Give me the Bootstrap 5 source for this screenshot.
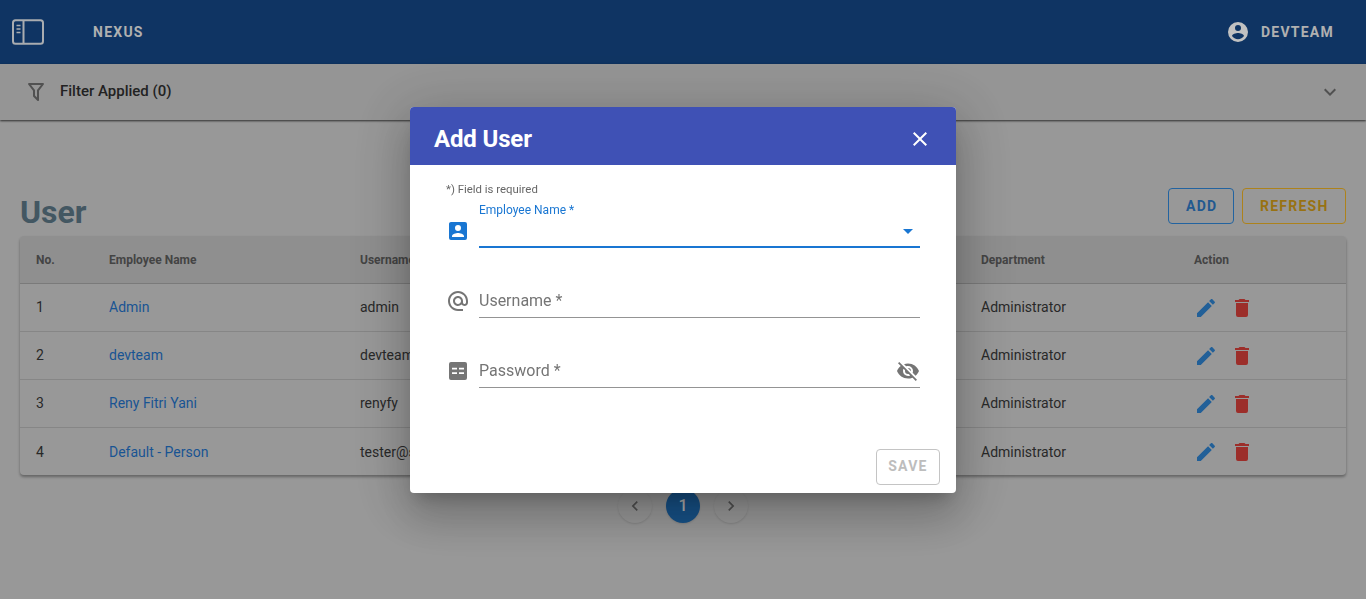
<!DOCTYPE html>
<html lang="en">
<head>
<meta charset="utf-8">
<title>Nexus - User</title>
<link href="https://cdn.jsdelivr.net/npm/bootstrap@5.3.0/dist/css/bootstrap.min.css" rel="stylesheet">
<style>
html,body{height:100%;overflow:hidden}
body{font-family:Roboto,"Liberation Sans",sans-serif;background:#bfbfbf;color:#2b2b2b}
.top-bar{height:64px;background:#13427c;color:#dcdcdc;padding:0 32px 0 12px;font-weight:700;font-size:14px;letter-spacing:1.25px}
.brand-name{margin-left:49px}
.user-name{margin-left:11px}
.filter-bar{height:56px;padding:0 24px 0 24px;background:#bbb;box-shadow:0 1px 2px rgba(0,0,0,.7);font-weight:500;font-size:15px;position:relative}
.filter-text{margin-top:-2px}
.filter-bar svg.funnel{margin-right:12px}
.page-wrap{padding:68px 20px 0}
.page-title{font-size:32px;line-height:48px;font-weight:700;color:#546d7b;margin:0}
.act-btn{height:36px;font-size:14px;font-weight:700;letter-spacing:1.25px;background:transparent;border-radius:4px;padding:0 17px;line-height:34px}
.act-add{border:1px solid #2b7cc8;color:#2b70b4;width:66px}
.act-refresh{border:1px solid #d9a322;color:#bf8f18;width:104px}
.user-sheet{border-radius:4px;box-shadow:0 2px 3px rgba(0,0,0,.35);overflow:hidden}
.user-table{width:1326px;table-layout:fixed;margin:0;--bs-table-bg:transparent;--bs-table-color:#333}
.user-table th{height:47px;background:#b3b3b3;font-size:12px;font-weight:700;color:#555;padding:2px 16px 0;vertical-align:middle;border-bottom:1px solid #999}
.user-table td{height:48px;font-size:14px;padding:0 16px;vertical-align:middle;border-bottom:1px solid #a8a8a8}
.user-table tr:last-child td{border-bottom:0;padding-top:2px}
.user-table tr:last-child .row-actions{margin-top:0}
.user-table a{color:#1f6ab8;text-decoration:none}
.row-actions{gap:12px;margin-top:1px}
.pager-row{margin-top:14px;gap:14px}
.pager-btn{width:34px;height:34px;border-radius:50%;background:#bfbfbf;box-shadow:0 1px 2px rgba(0,0,0,.12);font-size:16px;font-weight:500;color:#ddd}
.pager-on{background:#1c66aa}
.modal-backdrop.dim-layer{--bs-backdrop-bg:#000;--bs-backdrop-opacity:.2}
.modal-dialog.add-dialog{max-width:546px;width:546px;margin:0 auto;min-height:100%}
.add-content{border:0;border-radius:4px;height:386px;box-shadow:0 11px 15px -7px rgba(0,0,0,.2),0 24px 38px 3px rgba(0,0,0,.14),0 9px 60px 12px rgba(0,0,0,.16)}
.add-head{height:58px;background:#3f51b5;color:#fff;padding:6px 24px 0;border:0;border-radius:4px 4px 0 0}
.add-head h5{font-size:24px;font-weight:700;margin:0;letter-spacing:-.15px}
.add-body{padding:17px 36px 0;flex:0 0 auto}
.req-note{font-size:11.4px;line-height:14px;color:#666}
.form-line{height:70px;gap:9px}
.form-line.first-line{height:52px}
.field-icon{width:24px;height:24px;margin-bottom:5px;flex:none}
.field-box{flex:1;position:relative;height:36px;border-bottom:1px solid #949494;font-size:16px;line-height:24px;color:#757575;padding-top:7px}
.first-line .field-box{border-bottom:2px solid #1976d2;height:36px}
.float-label{position:absolute;left:0;top:-9px;font-size:12px;line-height:14px;color:#1976d2}
.field-end{position:absolute;right:0;top:7px}
.add-foot{padding:0 16px 8px;border:0;margin-top:auto}
.save-btn{width:64px;height:36px;font-size:14px;font-weight:700;letter-spacing:1.25px;color:#bdbdbd;border:1px solid #c4c4c4;border-radius:4px;background:#fff;padding:0}
</style>
</head>
<body>
<header class="top-bar d-flex align-items-center justify-content-between">
  <div class="d-flex align-items-center">
    <svg width="32" height="26" viewBox="0 0 32 26" fill="none" stroke="#d4d7dc" stroke-width="2"><rect x="1" y="1.2" width="30" height="23.6" rx="2.5"/><line x1="11.5" y1="1.2" x2="11.5" y2="24.8"/><path d="M4.5 6.5h4M4.5 10h4M4.5 13.5h4" stroke-width="1.4"/></svg>
    <span class="brand-name">NEXUS</span>
  </div>
  <div class="d-flex align-items-center">
    <svg width="24" height="24" viewBox="0 0 24 24" fill="#f2f2f2"><path d="M12,19.2C9.5,19.2 7.29,17.92 6,16C6.03,14 10,12.9 12,12.9C14,12.9 17.97,14 18,16C16.71,17.92 14.5,19.2 12,19.2M12,5A3,3 0 0,1 15,8A3,3 0 0,1 12,11A3,3 0 0,1 9,8A3,3 0 0,1 12,5M12,2A10,10 0 0,0 2,12A10,10 0 0,0 12,22A10,10 0 0,0 22,12A10,10 0 0,0 12,2Z"/></svg>
    <span class="user-name">DEVTEAM</span>
  </div>
</header>

<section class="filter-bar d-flex align-items-center justify-content-between">
  <div class="d-flex align-items-center">
    <svg class="funnel" width="24" height="24" viewBox="0 0 24 24" fill="#666"><path d="M15,19.88C15.04,20.18 14.94,20.5 14.71,20.71C14.32,21.1 13.69,21.1 13.3,20.71L9.29,16.7C9.06,16.47 8.96,16.16 9,15.87V10.75L4.21,4.62C3.87,4.19 3.95,3.56 4.38,3.22C4.57,3.08 4.78,3 5,3V3H19V3C19.22,3 19.43,3.08 19.62,3.22C20.05,3.56 20.13,4.19 19.79,4.62L15,10.75V19.88M7.04,5L11,10.06V15.58L13,17.58V10.05L16.96,5H7.04Z"/></svg>
    <span class="filter-text">Filter Applied (0)</span>
  </div>
  <svg width="24" height="24" viewBox="0 0 24 24" fill="#666"><path d="M7.41,8.58L12,13.17L16.59,8.58L18,10L12,16L6,10L7.41,8.58Z"/></svg>
</section>

<main class="page-wrap">
  <div class="d-flex justify-content-between mb-0">
    <h1 class="page-title">User</h1>
    <div class="d-flex gap-2">
      <button class="act-btn act-add" type="button">ADD</button>
      <button class="act-btn act-refresh" type="button">REFRESH</button>
    </div>
  </div>
  <div class="user-sheet">
    <table class="table user-table">
      <colgroup><col style="width:73px"><col style="width:251px"><col style="width:200px"><col style="width:200px"><col style="width:221px"><col style="width:213px"><col style="width:168px"></colgroup>
      <thead><tr><th>No.</th><th>Employee Name</th><th>Username</th><th></th><th></th><th>Department</th><th>Action</th></tr></thead>
      <tbody>
        <tr><td>1</td><td><a href="#">Admin</a></td><td>admin</td><td></td><td></td><td>Administrator</td><td><div class="row-actions d-flex"><svg width="24" height="24" viewBox="0 0 24 24" fill="#2b78bf"><path d="M20.71,7.04C21.1,6.65 21.1,6 20.71,5.63L18.37,3.29C18,2.9 17.35,2.9 16.96,3.29L15.12,5.12L18.87,8.87M3,17.25V21H6.75L17.81,9.93L14.06,6.18L3,17.25Z"/></svg><svg width="24" height="24" viewBox="0 0 24 24" fill="#c43a35"><path d="M19,4H15.5L14.5,3H9.5L8.5,4H5V6H19M6,19A2,2 0 0,0 8,21H16A2,2 0 0,0 18,19V7H6V19Z"/></svg></div></td></tr>
        <tr><td>2</td><td><a href="#">devteam</a></td><td>devteam</td><td></td><td></td><td>Administrator</td><td><div class="row-actions d-flex"><svg width="24" height="24" viewBox="0 0 24 24" fill="#2b78bf"><path d="M20.71,7.04C21.1,6.65 21.1,6 20.71,5.63L18.37,3.29C18,2.9 17.35,2.9 16.96,3.29L15.12,5.12L18.87,8.87M3,17.25V21H6.75L17.81,9.93L14.06,6.18L3,17.25Z"/></svg><svg width="24" height="24" viewBox="0 0 24 24" fill="#c43a35"><path d="M19,4H15.5L14.5,3H9.5L8.5,4H5V6H19M6,19A2,2 0 0,0 8,21H16A2,2 0 0,0 18,19V7H6V19Z"/></svg></div></td></tr>
        <tr><td>3</td><td><a href="#">Reny Fitri Yani</a></td><td>renyfy</td><td></td><td></td><td>Administrator</td><td><div class="row-actions d-flex"><svg width="24" height="24" viewBox="0 0 24 24" fill="#2b78bf"><path d="M20.71,7.04C21.1,6.65 21.1,6 20.71,5.63L18.37,3.29C18,2.9 17.35,2.9 16.96,3.29L15.12,5.12L18.87,8.87M3,17.25V21H6.75L17.81,9.93L14.06,6.18L3,17.25Z"/></svg><svg width="24" height="24" viewBox="0 0 24 24" fill="#c43a35"><path d="M19,4H15.5L14.5,3H9.5L8.5,4H5V6H19M6,19A2,2 0 0,0 8,21H16A2,2 0 0,0 18,19V7H6V19Z"/></svg></div></td></tr>
        <tr><td>4</td><td><a href="#">Default - Person</a></td><td>tester@s</td><td></td><td></td><td>Administrator</td><td><div class="row-actions d-flex"><svg width="24" height="24" viewBox="0 0 24 24" fill="#2b78bf"><path d="M20.71,7.04C21.1,6.65 21.1,6 20.71,5.63L18.37,3.29C18,2.9 17.35,2.9 16.96,3.29L15.12,5.12L18.87,8.87M3,17.25V21H6.75L17.81,9.93L14.06,6.18L3,17.25Z"/></svg><svg width="24" height="24" viewBox="0 0 24 24" fill="#c43a35"><path d="M19,4H15.5L14.5,3H9.5L8.5,4H5V6H19M6,19A2,2 0 0,0 8,21H16A2,2 0 0,0 18,19V7H6V19Z"/></svg></div></td></tr>
      </tbody>
    </table>
  </div>
  <nav class="pager-row d-flex justify-content-center">
    <div class="pager-btn d-flex align-items-center justify-content-center"><svg width="20" height="20" viewBox="0 0 24 24" fill="#666"><path d="M15.41,16.58L10.83,12L15.41,7.41L14,6L8,12L14,18L15.41,16.58Z"/></svg></div>
    <div class="pager-btn pager-on d-flex align-items-center justify-content-center">1</div>
    <div class="pager-btn d-flex align-items-center justify-content-center"><svg width="20" height="20" viewBox="0 0 24 24" fill="#666"><path d="M8.59,16.58L13.17,12L8.59,7.41L10,6L16,12L10,18L8.59,16.58Z"/></svg></div>
  </nav>
</main>

<div class="modal-backdrop dim-layer show"></div>
<div class="modal d-block" tabindex="-1">
  <div class="modal-dialog modal-dialog-centered add-dialog">
    <div class="modal-content add-content">
      <div class="modal-header add-head d-flex align-items-center justify-content-between">
        <h5 class="modal-title">Add User</h5>
        <svg width="24" height="24" viewBox="0 0 24 24" fill="#fff"><path d="M19,6.41L17.59,5L12,10.59L6.41,5L5,6.41L10.59,12L5,17.59L6.41,19L12,13.41L17.59,19L19,17.59L13.41,12L19,6.41Z"/></svg>
      </div>
      <div class="modal-body add-body">
        <div class="req-note">*) Field is required</div>
        <div class="form-line first-line d-flex align-items-end">
          <svg class="field-icon" viewBox="0 0 24 24" fill="#1976d2"><path d="M6,17C6,15 10,13.9 12,13.9C14,13.9 18,15 18,17V18H6M15,9A3,3 0 0,1 12,12A3,3 0 0,1 9,9A3,3 0 0,1 12,6A3,3 0 0,1 15,9M3,5V19A2,2 0 0,0 5,21H19A2,2 0 0,0 21,19V5A2,2 0 0,0 19,3H5C3.89,3 3,3.9 3,5Z"/></svg>
          <div class="field-box">
            <span class="float-label">Employee Name *</span>
            <svg class="field-end" width="24" height="24" viewBox="0 0 24 24" fill="#1976d2"><path d="M7,10L12,15L17,10H7Z"/></svg>
          </div>
        </div>
        <div class="form-line d-flex align-items-end">
          <svg class="field-icon" viewBox="0 0 24 24" fill="#757575"><path d="M12 2C6.48 2 2 6.48 2 12s4.48 10 10 10h5v-2h-5c-4.34 0-8-3.66-8-8s3.66-8 8-8 8 3.66 8 8v1.43c0 .79-.71 1.57-1.5 1.57s-1.5-.78-1.5-1.57V12c0-2.76-2.24-5-5-5s-5 2.24-5 5 2.24 5 5 5c1.38 0 2.64-.56 3.54-1.47.65.89 1.77 1.47 2.96 1.47 1.97 0 3.5-1.6 3.5-3.57V12c0-5.52-4.48-10-10-10zm0 13c-1.66 0-3-1.34-3-3s1.34-3 3-3 3 1.34 3 3-1.34 3-3 3z"/></svg>
          <div class="field-box">Username *</div>
        </div>
        <div class="form-line d-flex align-items-end">
          <svg class="field-icon" viewBox="0 0 24 24" fill="#757575"><path fill-rule="evenodd" d="M5 3H19A2 2 0 0 1 21 5V19A2 2 0 0 1 19 21H5A2 2 0 0 1 3 19V5A2 2 0 0 1 5 3ZM6 8.8V10.6H11V8.8ZM13 8.8V10.6H18V8.8ZM6 13.2V15H11V13.2ZM13 13.2V15H18V13.2Z"/></svg>
          <div class="field-box">Password *
            <svg class="field-end" width="24" height="24" viewBox="0 0 24 24" fill="#757575"><path d="M11.83,9L15,12.16C15,12.11 15,12.05 15,12A3,3 0 0,0 12,9C11.94,9 11.89,9 11.83,9M7.53,9.8L9.08,11.35C9.03,11.56 9,11.77 9,12A3,3 0 0,0 12,15C12.22,15 12.44,14.97 12.65,14.92L14.2,16.47C13.53,16.8 12.79,17 12,17A5,5 0 0,1 7,12C7,11.21 7.2,10.47 7.53,9.8M2,4.27L4.28,6.55L4.73,7C3.08,8.3 1.78,10 1,12C2.73,16.39 7,19.5 12,19.5C13.55,19.5 15.03,19.2 16.38,18.66L16.81,19.08L19.73,22L21,20.73L3.27,3M12,7A5,5 0 0,1 17,12C17,12.64 16.87,13.26 16.64,13.82L19.57,16.75C21.07,15.5 22.27,13.86 23,12C21.27,7.61 17,4.5 12,4.5C10.6,4.5 9.26,4.75 8,5.2L10.17,7.35C10.74,7.13 11.35,7 12,7Z"/></svg>
          </div>
        </div>
      </div>
      <div class="modal-footer add-foot">
        <button class="save-btn m-0" type="button" disabled>SAVE</button>
      </div>
    </div>
  </div>
</div>
<script src="https://cdn.jsdelivr.net/npm/bootstrap@5.3.0/dist/js/bootstrap.bundle.min.js"></script>
</body>
</html>
